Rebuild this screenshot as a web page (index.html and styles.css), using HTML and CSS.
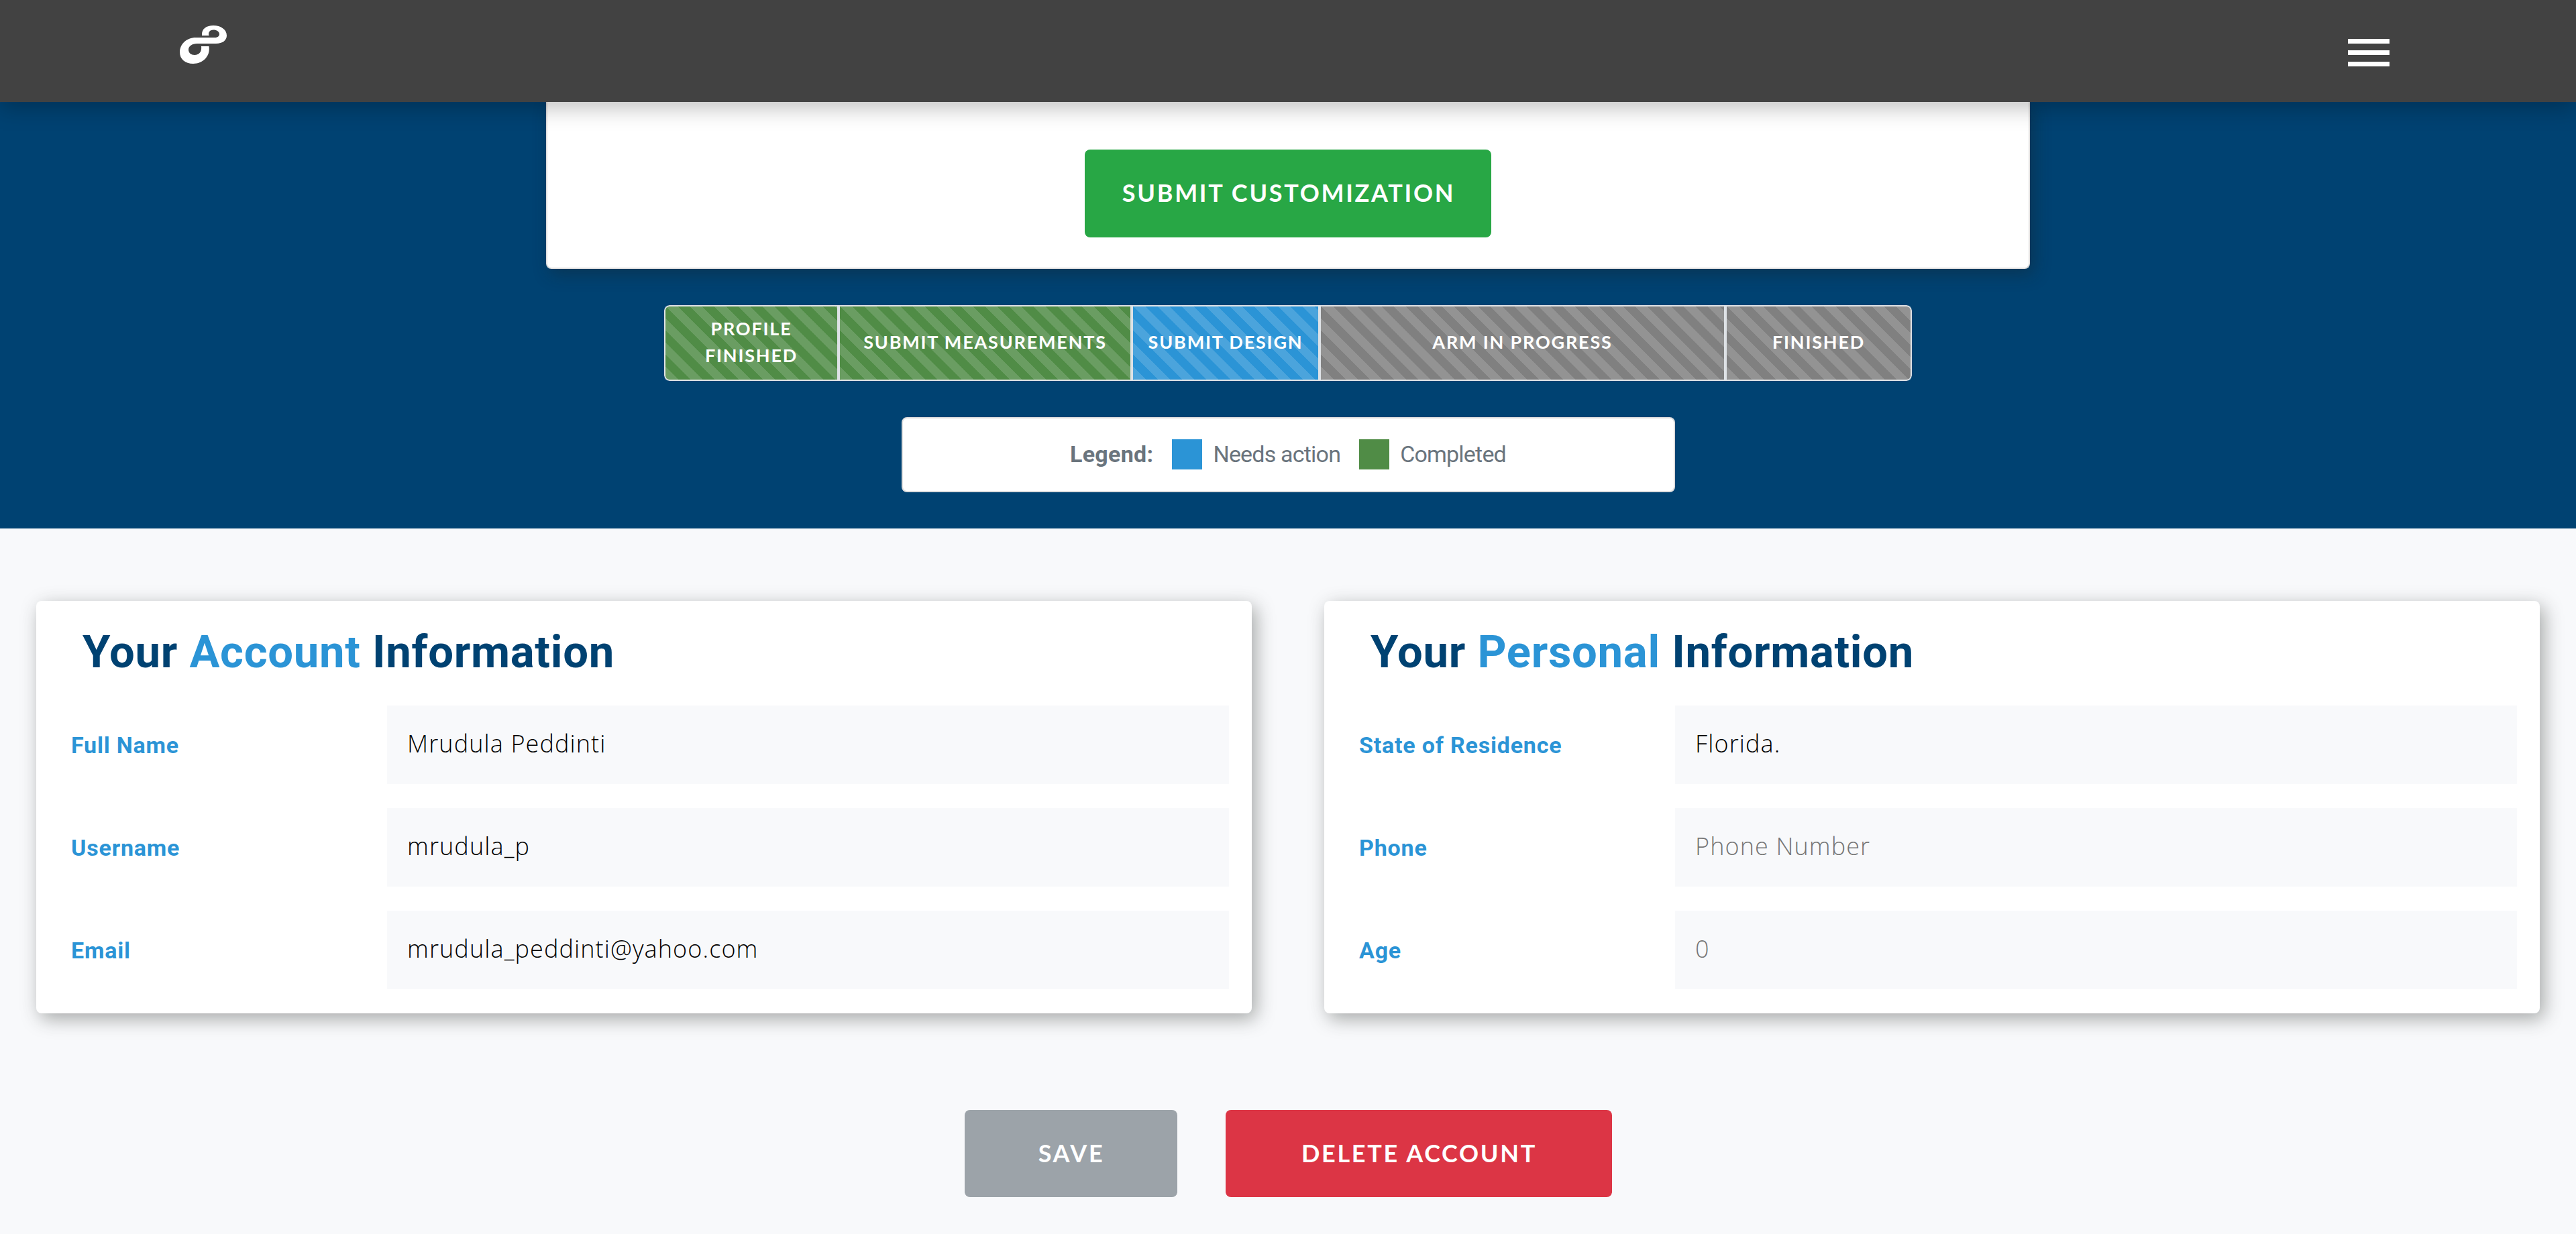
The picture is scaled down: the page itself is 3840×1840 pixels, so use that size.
FILE: index.html
```html
<!DOCTYPE html>
<html lang="en">
<head>
    <meta charset="UTF-8">
    <meta name="viewport" content="width=device-width, initial-scale=1.0">
    <title>Profile</title>
    <link rel="stylesheet" href="styles.css">
</head>
<body>
    <nav class="navbar">
        <a class="brand" href="#">
            <svg width="72" height="60" viewBox="0 0 72 60">
                <path fill="#fff" fill-rule="evenodd" d="M34 16 C33 6 41 1 51 1 C62 1 71 7 71 16 C71 23 65 28 55 28 L27 28 C19 28 14 32 14 37 C14 42 18 45 23 45 C30 45 34 40 33 32 L44.500 32 C47 47 35 58 21 58 C9 58 1 51 1 41 C1 29 11 19 25 19 L53 19 C57 19 60 17 60 14 C60 10 56 7.500 51 7.500 C46 7.500 43 11 44.500 16 Z"/>
            </svg>
        </a>
        <button class="menu-toggle" aria-label="Menu">
            <span></span>
            <span></span>
            <span></span>
        </button>
    </nav>

    <section class="status">
        <div class="customization">
            <button class="btn btn-success">SUBMIT CUSTOMIZATION</button>
        </div>
        <div class="progress">
            <div class="step done">PROFILE<br>FINISHED</div>
            <div class="step done">SUBMIT MEASUREMENTS</div>
            <div class="step action">SUBMIT DESIGN</div>
            <div class="step">ARM IN PROGRESS</div>
            <div class="step">FINISHED</div>
        </div>
        <div class="legend">
            <strong>Legend:</strong>
            <span class="swatch action"></span>
            <span>Needs action</span>
            <span class="swatch done"></span>
            <span>Completed</span>
        </div>
    </section>

    <main>
        <div class="cards">
            <div class="card">
                <h2>Your <span>Account</span> Information</h2>
                <div class="row">
                    <label for="name">Full Name</label>
                    <input id="name" type="text" value="Mrudula Peddinti">
                </div>
                <div class="row">
                    <label for="username">Username</label>
                    <input id="username" type="text" value="mrudula_p">
                </div>
                <div class="row">
                    <label for="email">Email</label>
                    <input id="email" type="text" value="mrudula_peddinti@yahoo.com">
                </div>
            </div>
            <div class="card">
                <h2>Your <span>Personal</span> Information</h2>
                <div class="row">
                    <label for="state">State of Residence</label>
                    <input id="state" type="text" value="Florida.">
                </div>
                <div class="row">
                    <label for="phone">Phone</label>
                    <input id="phone" type="text" placeholder="Phone Number">
                </div>
                <div class="row">
                    <label for="age">Age</label>
                    <input id="age" type="text" placeholder="0">
                </div>
            </div>
        </div>
        <div class="actions">
            <button class="btn btn-save">SAVE</button>
            <button class="btn btn-danger">DELETE ACCOUNT</button>
        </div>
    </main>
</body>
</html>
```

FILE: styles.css
```css
* {
    box-sizing: border-box;
}

body {
    margin: 0;
    height: 1840px;
    background-color: #f8f9fb;
    font-family: Lato, sans-serif;
    overflow: hidden;
}

.navbar {
    position: relative;
    z-index: 2;
    display: flex;
    justify-content: space-between;
    height: 152px;
    padding: 37px 278px 0 267px;
    background-color: #424242;
    box-shadow: 0 8px 32px rgba(0, 0, 0, 0.26);
}

.brand {
    height: 60px;
}

.brand svg {
    display: block;
}

.menu-toggle {
    display: flex;
    flex-direction: column;
    gap: 10px;
    width: 62px;
    margin-top: 21px;
    padding: 0;
    border: none;
    background: none;
}

.menu-toggle span {
    width: 62px;
    height: 7px;
    background-color: #fff;
}

.status {
    display: flex;
    flex-direction: column;
    align-items: center;
    height: 636px;
    background-color: #004272;
}

.customization {
    width: 2212px;
    height: 249px;
    padding-top: 71px;
    text-align: center;
    background-color: #fff;
    border: 2px solid #dfdfdf;
    border-top: none;
    border-radius: 0 0 8px 8px;
    box-shadow: 6px 8px 24px rgba(20, 40, 50, 0.45);
}

.btn {
    height: 130px;
    padding: 0 0 3px 2px;
    border: none;
    border-radius: 8px;
    color: #fff;
    font-family: Lato, sans-serif;
    font-size: 36px;
    font-weight: 700;
    letter-spacing: 2.7px;
    white-space: nowrap;
}

.btn-success {
    width: 606px;
    height: 131px;
    background-color: #28a745;
}

.progress {
    display: grid;
    grid-template-columns: 260px 437px 280px 605px 278px;
    width: 1860px;
    height: 113px;
    margin-top: 54px;
    border-radius: 8px;
    overflow: hidden;
}

.step {
    display: flex;
    align-items: center;
    justify-content: center;
    padding-bottom: 3px;
    border: 2px solid #dee2e6;
    background-color: #808080;
    background-image: linear-gradient(45deg, rgba(255, 255, 255, 0.15) 25%, transparent 25%, transparent 50%, rgba(255, 255, 255, 0.15) 50%, rgba(255, 255, 255, 0.15) 75%, transparent 75%, transparent);
    background-size: 36px 36px;
    color: #fff;
    font-size: 27px;
    font-weight: 700;
    letter-spacing: 1.8px;
    line-height: 40px;
    text-align: center;
}

.step:first-child {
    border-radius: 8px 0 0 8px;
}

.step:last-child {
    border-radius: 0 8px 8px 0;
}

.done {
    background-color: #508c46;
}

.action {
    background-color: #2b94d6;
}

.legend {
    display: flex;
    align-items: center;
    justify-content: center;
    width: 1153px;
    height: 112px;
    margin-top: 54px;
    padding-bottom: 2px;
    background-color: #fff;
    border: 2px solid #dfdfdf;
    border-radius: 8px;
    color: #6a747d;
    font-family: Roboto, sans-serif;
    font-size: 34px;
    letter-spacing: -0.8px;
}

.legend strong {
    letter-spacing: 0.3px;
}

.swatch {
    width: 45px;
    height: 45px;
    margin: 0 16px 0 28px;
}

.cards {
    display: grid;
    grid-template-columns: 1812px 1812px;
    gap: 108px;
    padding: 108px 54px 0;
}

.card {
    height: 615px;
    padding: 40px 34px 0 52px;
    background-color: #fff;
    border-radius: 8px;
    box-shadow: 6px 8px 28px rgba(40, 44, 40, 0.4);
}

.card h2 {
    height: 116px;
    margin: 0 0 0 17px;
    color: #004272;
    font-family: Roboto, sans-serif;
    font-size: 67px;
    font-weight: 700;
    letter-spacing: 0.7px;
    line-height: 72px;
    white-space: nowrap;
}

.card h2 span {
    color: #2b94d6;
}

.row {
    display: grid;
    grid-template-columns: 471px 1fr;
    height: 117px;
    margin-bottom: 36px;
}

.row label {
    color: #2b94d6;
    font-family: Roboto, sans-serif;
    font-size: 34px;
    font-weight: 700;
    letter-spacing: 0.8px;
    line-height: 118px;
}

.row input {
    height: 117px;
    padding: 0 30px 4px;
    border: none;
    background-color: #f8f9fb;
    color: #000;
    font-family: "Open Sans", sans-serif;
    font-size: 36px;
    font-weight: 300;
    letter-spacing: 1.1px;
}

.row input::placeholder {
    color: #757575;
}

.actions {
    display: flex;
    justify-content: center;
    gap: 72px;
    padding-top: 144px;
}

.btn-save {
    width: 317px;
    background-color: #9ca3a9;
}

.btn-danger {
    width: 576px;
    background-color: #dc3545;
}
```
